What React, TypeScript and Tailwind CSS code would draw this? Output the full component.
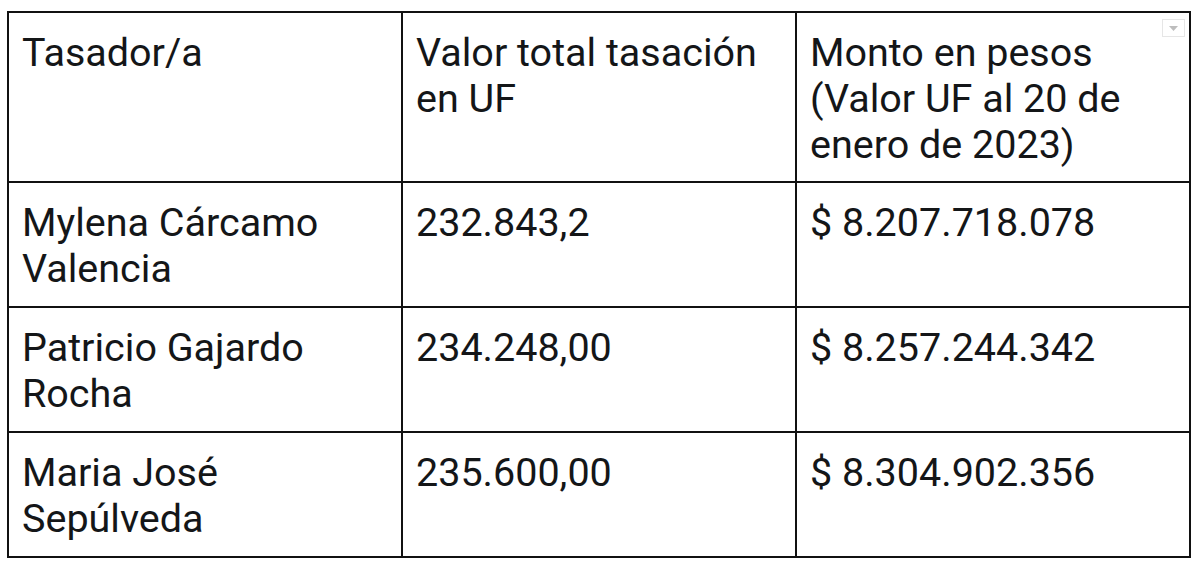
const rows = [
  { name: ["Mylena Cárcamo", "Valencia"], uf: "232.843,2", pesos: "$ 8.207.718.078" },
  { name: ["Patricio Gajardo", "Rocha"], uf: "234.248,00", pesos: "$ 8.257.244.342" },
  { name: ["Maria José", "Sepúlveda"], uf: "235.600,00", pesos: "$ 8.304.902.356" },
];

const Cell = ({ children, className = "" }: { children: React.ReactNode; className?: string }) => (
  <div className={`bg-white px-[13px] pt-[17px] ${className}`}>{children}</div>
);

const App = () => {
  return (
    <div
      className="w-[1200px] h-[567px] bg-white pl-[7px] pt-[11px] text-[39.5px] leading-[46px] text-[#141618]"
      style={{ fontFamily: "Roboto, 'Liberation Sans', sans-serif" }}
    >
      <div className="w-[1184px] grid grid-cols-[392px_392px_392px] gap-[2px] bg-[#111] p-[2px]">
        <Cell className="pb-[13px]">Tasador/a</Cell>
        <Cell className="pb-[13px]">
          Valor total tasación
          <br />
          en UF
        </Cell>
        <Cell className="pb-[13px] relative">
          Monto en pesos
          <br />
          (Valor UF al 20 de
          <br />
          enero de 2023)
          <div className="absolute right-[4px] top-[6px] w-[23px] h-[18px] border border-[#e6e6e6] flex items-center justify-center">
            <svg width="9" height="5" viewBox="0 0 9 5">
              <path d="M0 0 L9 0 L4.5 5 Z" fill="#bdbdbd" />
            </svg>
          </div>
        </Cell>
        {rows.map((r) => (
          <>
            <Cell key={r.uf + "a"} className="pb-[14px]">
              {r.name[0]}
              <br />
              {r.name[1]}
            </Cell>
            <Cell key={r.uf + "b"} className="pb-[14px]">{r.uf}</Cell>
            <Cell key={r.uf + "c"} className="pb-[14px]">{r.pesos}</Cell>
          </>
        ))}
      </div>
    </div>
  );
};

export default App;
